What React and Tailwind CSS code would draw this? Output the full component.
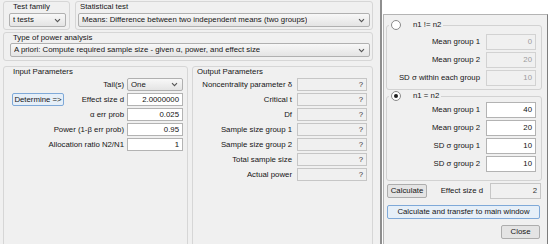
import React from 'react';

// small dropdown arrow used by the combo boxes
function Chevron() {
  return (
    <svg width="7" height="5" viewBox="0 0 7 5" className="shrink-0">
      <path d="M1 1.2 L3.5 3.7 L6 1.2" fill="none" stroke="#555" strokeWidth="1.1" />
    </svg>
  );
}

function Select({ value, height = 'h-[14px]', className = '' }) {
  return (
    <div className={`flex items-center justify-between ${height} pl-[3px] pr-[4px] border border-[#b0b0b0] rounded-[2px] bg-linear-to-b from-[#f8f8f8] to-[#e4e4e4] ${className}`}>
      <span className="truncate">{value}</span>
      <Chevron />
    </div>
  );
}

function Field({ value, variant = 'input', className = '' }) {
  const styles = {
    input: 'bg-white border-[#b3b3b3] text-[#111]',
    output: 'bg-[#f0f0f0] border-[#c6c6c6] text-[#333]',
    disabled: 'bg-[#f0f0f0] border-[#d2d2d2] text-[#9c9c9c]',
  };
  return (
    <div className={`flex items-center justify-end pr-[3px] border ${styles[variant]} ${className}`}>
      {value}
    </div>
  );
}

function Btn({ children, focused = false, className = '' }) {
  return (
    <button
      className={`flex items-center justify-center border rounded-[2px] leading-none ${
        focused ? 'border-[#7fa9d8] bg-[#e6eff8]' : 'border-[#adadad] bg-[#e4e4e4]'
      } ${className}`}
    >
      {children}
    </button>
  );
}

function Radio({ checked = false }) {
  return (
    <span className="flex items-center justify-center w-[10px] h-[10px] rounded-full border border-[#8a8a8a] bg-white shrink-0">
      {checked && <span className="w-[4px] h-[4px] rounded-full bg-[#1f1f1f]" />}
    </span>
  );
}

// titled panel of the main window (title sits inside the frame)
function Group({ title, titlePad = 'pl-[9px]', className = '', children }) {
  return (
    <div className={`border border-[#d6d6d6] rounded-[3px] ${className}`}>
      <div className={`h-[10px] flex items-center ${titlePad}`}>{title}</div>
      {children}
    </div>
  );
}

function RadioGroup({ label, checked, rows, rowsTop, className = '' }) {
  return (
    <fieldset className={`ml-[2px] w-[156px] border border-[#d2d2d2] rounded-[3px] ${className}`}>
      <legend className="ml-[2px] px-[2px] flex items-center h-[10px]">
        <Radio checked={checked} />
        <span className="ml-[12px]">{label}</span>
      </legend>
      <div className={`${rowsTop} flex flex-col gap-[2px] pr-[5px]`}>
        {rows.map((row) => (
          <div key={row.label} className="flex items-center justify-end h-[16px]">
            <span className="pr-[6px]">{row.label}</span>
            <Field value={row.value} variant={checked ? 'input' : 'disabled'} className="w-[50px] h-full" />
          </div>
        ))}
      </div>
    </fieldset>
  );
}

export default function App() {
  const inputRows = [
    { label: 'Effect size d', value: '2.0000000', button: true },
    { label: 'α err prob', value: '0.025' },
    { label: 'Power (1-β err prob)', value: '0.95' },
    { label: 'Allocation ratio N2/N1', value: '1' },
  ];

  const outputRows = [
    'Noncentrality parameter δ',
    'Critical t',
    'Df',
    'Sample size group 1',
    'Sample size group 2',
    'Total sample size',
    'Actual power',
  ];

  return (
    <div className="w-[550px] h-[244px] flex overflow-hidden bg-white font-['Liberation_Sans',Arial,sans-serif] text-[7.8px] text-[#151515] leading-none whitespace-nowrap">
      {/* Main window */}
      <div className="w-[380px] h-full shrink-0 overflow-hidden bg-[#f0f0f0] pl-[3px] pr-[7px] pt-[1px] flex flex-col">
        <div className="flex gap-[5px]">
          <Group title="Test family" className="w-[67px] pl-[5px] pr-[3px] pb-[2px]" titlePad="pl-[4px]">
            <Select value="t tests" className="mt-[1px]" />
          </Group>
          <Group title="Statistical test" className="flex-1 px-[2px] pb-[2px]" titlePad="pl-[2px]">
            <Select value="Means: Difference between two independent means (two groups)" className="mt-[1px]" />
          </Group>
        </div>

        <Group title="Type of power analysis" className="mt-[2px] pl-[6px] pr-[2px] pb-[3px]" titlePad="pl-[3px]">
          <Select value="A priori: Compute required sample size - given α, power, and effect size" />
        </Group>

        <div className="mt-[5px] flex gap-[4px] h-[200px] shrink-0">
          {/* Input Parameters */}
          <Group title="Input Parameters" className="w-[185px]">
            <div className="mt-[1px] flex flex-col gap-[2px] pl-[8px] pr-[4px]">
              <div className="flex items-center justify-end h-[13px]">
                <span className="pr-[3px]">Tail(s)</span>
                <Select value="One" height="h-full" className="w-[56px]" />
              </div>
              {inputRows.map((row) => (
                <div key={row.label} className="flex items-center h-[13px]">
                  {row.button && (
                    <Btn focused className="w-[52px] h-full">Determine =&gt;</Btn>
                  )}
                  <span className="ml-auto pr-[3px]">{row.label}</span>
                  <Field value={row.value} className="w-[56px] h-full" />
                </div>
              ))}
            </div>
          </Group>

          {/* Output Parameters */}
          <Group title="Output Parameters" className="flex-1" titlePad="pl-[4px]">
            <div className="mt-[1px] flex flex-col gap-[2px] pr-[5px]">
              {outputRows.map((label) => (
                <div key={label} className="flex items-center justify-end h-[13px]">
                  <span className="pr-[5px]">{label}</span>
                  <Field value="?" variant="output" className="w-[70px] h-full" />
                </div>
              ))}
            </div>
          </Group>
        </div>
      </div>

      <div className="w-[2px] h-full shrink-0 bg-[#8e8e8e]" />

      {/* Effect size drawer */}
      <div className="flex-1 h-full bg-white pt-[14px] pl-[1px]">
        <div className="w-[165px] h-[240px] bg-[#f0f0f0] border-l border-t border-r border-[#b4b4b4] border-r-[#7c7c7c] pt-[5px]">
          <RadioGroup
            label="n1 != n2"
            rowsTop="mt-[4px]"
            className="pb-[3px]"
            rows={[
              { label: 'Mean group 1', value: '0' },
              { label: 'Mean group 2', value: '20' },
              { label: 'SD σ within each group', value: '10' },
            ]}
          />
          <RadioGroup
            label="n1 = n2"
            checked
            rowsTop="mt-[1px]"
            className="mt-[1px] pb-[8px]"
            rows={[
              { label: 'Mean group 1', value: '40' },
              { label: 'Mean group 2', value: '20' },
              { label: 'SD σ group 1', value: '10' },
              { label: 'SD σ group 2', value: '10' },
            ]}
          />

          <div className="mt-[2px] pl-[3px] pr-[6px] flex flex-col">
            <div className="flex items-center h-[16px]">
              <Btn className="w-[40px] h-[14px]">Calculate</Btn>
              <span className="ml-auto pr-[7px]">Effect size d</span>
              <Field value="2" variant="output" className="w-[51px] h-full" />
            </div>
            <Btn focused className="mt-[6px] w-[153px] h-[14px]">Calculate and transfer to main window</Btn>
            <Btn className="mt-[6px] ml-auto mr-[1px] w-[39px] h-[14px]">Close</Btn>
          </div>
        </div>
      </div>
    </div>
  );
}
